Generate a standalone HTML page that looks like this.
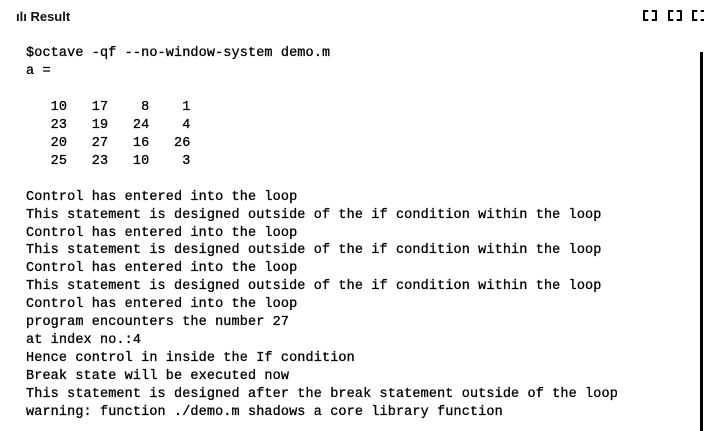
<!DOCTYPE html>
<html><head><style>
body{margin:0;width:704px;height:431px;background:#fff;overflow:hidden;position:relative;font-family:"Liberation Sans",sans-serif}
.t{position:absolute;left:16px;top:9px;font-size:13px;font-weight:bold;color:#111}
pre{position:absolute;left:26px;top:45px;margin:0;font-family:"Liberation Mono",monospace;font-size:13.5px;letter-spacing:0.12px;line-height:17.95px;color:#000;-webkit-text-stroke:0.3px #000}
.sb{position:absolute;left:700px;top:52px;width:3px;height:379px;background:#000}
.ic{position:absolute;top:10px;width:14px;height:11px;border:2px dashed #000;box-sizing:border-box}
</style></head><body>
<div class="t">ılı Result</div>
<div class="ic" style="left:643px"></div>
<div class="ic" style="left:668px"></div>
<div class="ic" style="left:692px"></div>
<div class="sb"></div>
<pre>$octave -qf --no-window-system demo.m
a =

   10   17    8    1
   23   19   24    4
   20   27   16   26
   25   23   10    3

Control has entered into the loop
This statement is designed outside of the if condition within the loop
Control has entered into the loop
This statement is designed outside of the if condition within the loop
Control has entered into the loop
This statement is designed outside of the if condition within the loop
Control has entered into the loop
program encounters the number 27
at index no.:4
Hence control in inside the If condition
Break state will be executed now
This statement is designed after the break statement outside of the loop
warning: function ./demo.m shadows a core library function</pre>
</body></html>
